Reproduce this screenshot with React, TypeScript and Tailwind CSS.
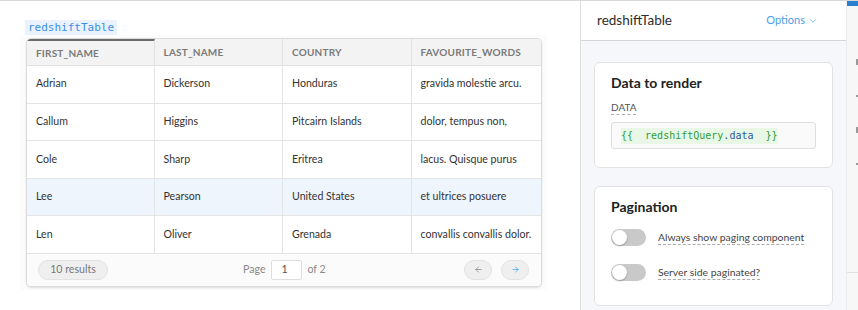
import { ArrowLeft, ArrowRight, ChevronDown } from 'lucide-react';

const columns = ['FIRST_NAME', 'LAST_NAME', 'COUNTRY', 'FAVOURITE_WORDS'];

const rows = [
  ['Adrian', 'Dickerson', 'Honduras', 'gravida molestie arcu.'],
  ['Callum', 'Higgins', 'Pitcairn Islands', 'dolor, tempus non,'],
  ['Cole', 'Sharp', 'Eritrea', 'lacus. Quisque purus'],
  ['Lee', 'Pearson', 'United States', 'et ultrices posuere'],
  ['Len', 'Oliver', 'Grenada', 'convallis convallis dolor.'],
];

const colWidths = ['w-[128px]', 'w-[129px]', 'w-[129px]', 'w-[130px]'];

function Toggle() {
  return (
    <div className="w-[35px] h-[17px] rounded-full bg-[#c9c9c9] flex items-center px-[1px] shrink-0">
      <div className="w-[15px] h-[15px] rounded-full bg-white shadow-[0_1px_2px_rgba(0,0,0,0.25)]" />
    </div>
  );
}

function DataTable() {
  return (
    <div className="w-[516px] rounded-[5px] border border-[#dcdcdc] bg-white overflow-hidden shadow-[0_1px_2px_rgba(0,0,0,0.12)]">
      {/* header */}
      <div className="flex h-[27px] bg-[#f3f3f3] border-b border-[#e2e2e2]">
        {columns.map((c, i) => (
          <div
            key={c}
            className={`${colWidths[i]} flex items-center pl-[9px] text-[10px] font-bold tracking-[0.02em] text-[#7a7a7a] ${i < 3 ? 'border-r border-[#e2e2e2]' : ''} ${i === 0 ? 'border-t-2 border-t-[#6b6b6b]' : ''}`}
          >
            {c}
          </div>
        ))}
      </div>
      {rows.map((r, ri) => (
        <div
          key={ri}
          className={`flex h-[37.6px] border-b border-[#e4e4e4] ${ri === 3 ? 'bg-[#eff5fd]' : 'bg-white'}`}
        >
          {r.map((v, i) => (
            <div
              key={i}
              className={`${colWidths[i]} flex items-center pl-[9px] text-[10.6px] text-[#333] ${i < 3 ? 'border-r border-[#e4e4e4]' : ''}`}
            >
              {v}
            </div>
          ))}
        </div>
      ))}
      {/* footer */}
      <div className="h-[32px] flex items-center px-[11px] bg-[#fbfbfb] text-[10.6px] text-[#888]">
        <div className="w-[70px] h-[20px] rounded-full bg-[#efefef] border border-[#e2e2e2] flex items-center justify-center text-[#777]">
          10 results
        </div>
        <div className="flex items-center ml-[135px]">
          <span>Page</span>
          <div className="w-[31px] h-[20px] ml-[6px] border border-[#dedede] rounded-[2px] bg-white flex items-center pl-[9px] text-[#555]">
            1
          </div>
          <span className="ml-[5px]">of 2</span>
        </div>
        <div className="ml-auto flex items-center gap-[9px] mr-[1px]">
          <div className="w-[28px] h-[20px] rounded-full bg-[#efefef] border border-[#e2e2e2] flex items-center justify-center">
            <ArrowLeft size={9} strokeWidth={1.75} color="#777" />
          </div>
          <div className="w-[28px] h-[20px] rounded-full bg-[#efefef] border border-[#e2e2e2] flex items-center justify-center">
            <ArrowRight size={9} strokeWidth={1.75} color="#2a9df4" />
          </div>
        </div>
      </div>
    </div>
  );
}

export default function App() {
  return (
    <div
      className="w-[858px] h-[310px] flex overflow-hidden bg-white border-t border-[#d9d9d9]"
      style={{ fontFamily: 'Lato, "Noto Sans", sans-serif' }}
    >
      {/* canvas */}
      <div className="w-[580px] shrink-0 pt-[19px] pl-[20px]">
        <div className="flex">
          <div className="ml-[5px] flex h-[15px] items-center px-[3px] bg-[#eaf3fd] text-[#3a8ee6] text-[11px] font-['DejaVu_Sans_Mono',monospace] leading-none">
            redshiftTable
          </div>
        </div>
        <div className="w-[527px] h-[255px] bg-[#fcfcfc] pl-[6px] pt-[3px]">
          <DataTable />
        </div>
      </div>

      {/* inspector */}
      <div className="w-[266px] shrink-0 border-l border-[#dedede] flex flex-col">
        <div className="h-[40px] shrink-0 bg-white border-b border-[#d6d6d6] flex items-center pl-[16px] pr-[28px]">
          <span className="text-[13.5px] text-[#2d2d2d]">redshiftTable</span>
          <span className="ml-auto flex items-center gap-[3px] text-[11px] text-[#4a9fe8]">
            Options <ChevronDown size={10} strokeWidth={1.75} />
          </span>
        </div>
        <div className="flex-1 bg-[#f5f7fa] px-[13px] pt-[21px] flex flex-col gap-[18px]">
          <div className="h-[106px] bg-white border border-[#e3e3e3] rounded-[6px] px-[16px] pt-[9px]">
            <div className="text-[14px] font-bold text-[#222]">Data to render</div>
            <div className="mt-[7px] inline-block text-[10px] text-[#555] border-b border-dashed border-[#aaa] leading-[13px]">
              DATA
            </div>
            <div className="mt-[5px] h-[27px] border border-[#dedede] rounded-[3px] bg-[#fafafa] flex items-center pl-[9px]">
              <span className="bg-[#e8f7e6] text-[10px] font-['DejaVu_Sans_Mono',monospace] text-[#2f9e3a] whitespace-pre leading-[16px]">
                {'{{  redshiftQuery'}
                <span className="text-[#2c5aa0]">.data</span>
                {'  }}'}
              </span>
            </div>
          </div>
          <div className="h-[120px] bg-white border border-[#e3e3e3] rounded-[6px] px-[16px] pt-[9px]">
            <div className="text-[14px] font-bold text-[#222]">Pagination</div>
            <div className="mt-[12px] flex items-center gap-[12px]">
              <Toggle />
              <span className="whitespace-nowrap text-[10.4px] text-[#444] border-b border-dashed border-[#aaa] leading-[14px]">
                Always show paging component
              </span>
            </div>
            <div className="mt-[18px] flex items-center gap-[12px]">
              <Toggle />
              <span className="whitespace-nowrap text-[10.4px] text-[#444] border-b border-dashed border-[#aaa] leading-[14px]">
                Server side paginated?
              </span>
            </div>
          </div>
        </div>
      </div>

      {/* clipped neighbour panel */}
      <div className="flex-1 bg-[#f7f7f7] border-l border-[#ececec] flex flex-col">
        <div className="h-[5px] bg-[#2b7fd1]" />
        <div className="flex-1 flex flex-col items-end pt-[53px] gap-[30px]">
          <div className="w-[2px] h-[6px] bg-[#999]" />
          <div className="w-[2px] h-[2px] bg-[#999]" />
          <div className="w-[2px] h-[6px] bg-[#999]" />
          <div className="w-[2px] h-[2px] bg-[#999]" />
        </div>
        <div className="h-[38px] border-t border-[#e0e0e0]" />
      </div>
    </div>
  );
}
